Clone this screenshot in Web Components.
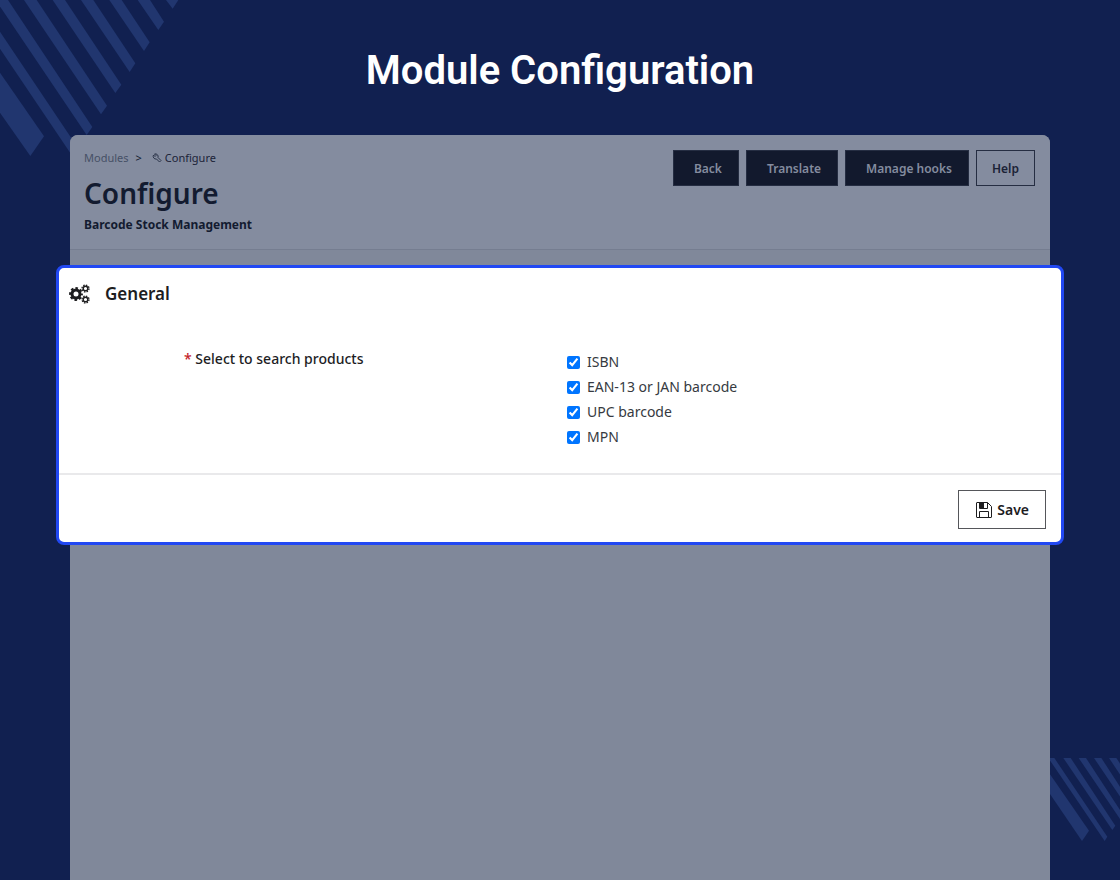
<!DOCTYPE html>
<html lang="en">
<head>
<meta charset="utf-8">
<meta name="viewport" content="width=device-width, initial-scale=1">
<title>Module Configuration</title>
<style>
    body{
        margin: 0;
        background: #112050;
        font-family: "Noto Sans", sans-serif;
        font-size: 14px;
        color: #1d1d1f;
    }
</style>
</head>
<body>
<module-page heading="Module Configuration">
    <page-header slot="header" heading="Configure" subtitle="Barcode Stock Management">
        <bread-crumbs slot="crumbs"></bread-crumbs>
        <tool-button primary>Back</tool-button>
        <tool-button primary>Translate</tool-button>
        <tool-button primary>Manage hooks</tool-button>
        <tool-button>Help</tool-button>
    </page-header>
    <settings-card heading="General" label="Select to search products">
        <check-option name="isbn">ISBN</check-option>
        <check-option name="ean13">EAN-13 or JAN barcode</check-option>
        <check-option name="upc">UPC barcode</check-option>
        <check-option name="mpn">MPN</check-option>
        <save-button slot="footer">Save</save-button>
    </settings-card>
</module-page>

<script>
'use strict'

const makeTemplate = (html) => {
    const template = document.createElement('template')
    template.innerHTML = html
    return template
}

class BaseElement extends HTMLElement {
    constructor () {
        super()
        this.attachShadow({mode:'open'})
        this.shadowRoot.appendChild(this.constructor.template.content.cloneNode(true))
    }
    fill(selector, name){
        this.shadowRoot.querySelector(selector).textContent = this.getAttribute(name)
    }
}

class ModulePage extends BaseElement {
    static template = makeTemplate(`
        <style>
            :host{
                position: relative;
                display: flex;
                flex-direction: column;
                box-sizing: border-box;
                min-height: 100vh;
                overflow: hidden;
            }
            .stripes{
                position: absolute;
                fill: #21366f;
            }
            .stripes-top{
                top: 0;
                left: 0;
            }
            .stripes-bottom{
                right: 0;
                bottom: 39px;
            }
            h1{
                position: relative;
                margin: 0;
                padding: 47px 16px 40px;
                font: 600 40px/48px Roboto, sans-serif;
                text-align: center;
                color: #ffffff;
            }
            main{
                position: relative;
                flex: 1;
                margin: 0 70px;
                background: #80889a;
                border-radius: 8px 8px 0 0;
            }
        </style>
        <svg class="stripes stripes-top" width="180" height="157" viewBox="0 0 540 471" aria-hidden="true">
            <path d="M0 218L132 409L91 468L0 338z"/>
            <path d="M0 95L234 444L217 468L0 146z"/>
            <path d="M-13 0H24L277 381L260 405z"/>
            <path d="M72 0H110L321 317L303 343z"/>
            <path d="M158 0H195L364 254L346 279z"/>
            <path d="M243 0H280L406 190L389 216z"/>
            <path d="M328 0H365L449 127L432 153z"/>
            <path d="M413 0H450L492 65L475 90z"/>
            <path d="M498 0H535L518 26z"/>
        </svg>
        <svg class="stripes stripes-bottom" width="70" height="83" viewBox="60 54 210 249" aria-hidden="true">
            <path d="M60 103L177 272L156 303L60 162z"/>
            <path d="M55 54H73L232 290L224 303z"/>
            <path d="M100 54H122L256 257L247 270z"/>
            <path d="M146 54H168L279 224L270 237z"/>
            <path d="M192 54H214L300 186V214z"/>
            <path d="M237 54H259L300 116V148z"/>
        </svg>
        <h1></h1>
        <main>
            <slot name="header"></slot>
            <slot></slot>
        </main>
    `)
    connectedCallback(){
        this.fill('h1', 'heading')
    }
}
window.customElements.define('module-page', ModulePage)

class PageHeader extends BaseElement {
    static template = makeTemplate(`
        <style>
            :host{
                display: flex;
                justify-content: space-between;
                align-items: flex-start;
                gap: 16px;
                padding: 15px 15px 16px 14px;
                background: #848c9f;
                border-bottom: 1px solid #757d90;
                border-radius: 8px 8px 0 0;
                color: #131b30;
            }
            h2{
                margin: 7px 0 4px;
                font-size: 28px;
                line-height: 40px;
                font-weight: 600;
            }
            p{
                margin: 0;
                font-size: 12px;
                line-height: 16px;
                font-weight: 700;
            }
            .tools{
                display: flex;
                flex-wrap: wrap;
                gap: 7px;
            }
        </style>
        <div>
            <slot name="crumbs"></slot>
            <h2></h2>
            <p></p>
        </div>
        <div class="tools"><slot></slot></div>
    `)
    connectedCallback(){
        this.fill('h2', 'heading')
        this.fill('p', 'subtitle')
    }
}
window.customElements.define('page-header', PageHeader)

class BreadCrumbs extends BaseElement {
    static template = makeTemplate(`
        <style>
            :host{
                display: block;
                font-size: 11px;
                line-height: 16px;
            }
            nav{
                display: flex;
                align-items: center;
            }
            a{
                display: flex;
                align-items: center;
                gap: 3px;
                color: #1b2338;
                text-decoration: none;
            }
            .parent{
                color: #465066;
            }
            .sep{
                margin: 0 10px 0 7px;
            }
            svg{
                display: block;
            }
        </style>
        <nav aria-label="Breadcrumb">
            <a class="parent" href="#modules">Modules</a>
            <span class="sep">&gt;</span>
            <a href="#configure">
                <svg width="10" height="10" viewBox="0 0 20 20" fill="none" stroke="#2b3449" stroke-width="2" stroke-linejoin="round" aria-hidden="true">
                    <path d="M3 4L6 7L8 5L5 2A5.500 5.500 0 0 1 12 9L18 15L15 18L9 12A5.500 5.500 0 0 1 3 4z"/>
                </svg>
                Configure
            </a>
        </nav>
    `)
}
window.customElements.define('bread-crumbs', BreadCrumbs)

class ToolButton extends BaseElement {
    static template = makeTemplate(`
        <style>
            :host{
                display: block;
            }
            button{
                height: 36px;
                padding: 0 15px;
                border: 1px solid #252d42;
                background: transparent;
                font: inherit;
                font-size: 12px;
                font-weight: 600;
                color: #1b2236;
                cursor: pointer;
            }
            :host([primary]) button{
                padding: 0 16px 0 20px;
                background: #12192d;
                color: #848c9f;
            }
        </style>
        <button type="button"><slot></slot></button>
    `)
}
window.customElements.define('tool-button', ToolButton)

class SettingsCard extends BaseElement {
    static template = makeTemplate(`
        <style>
            :host{
                display: block;
                margin: 15px -14px 0;
                border: 3px solid #2148f3;
                border-radius: 8px;
                background: #ffffff;
            }
            header{
                display: flex;
                align-items: center;
                gap: 15px;
                padding: 14px 10px;
            }
            h3{
                margin: 0;
                font-size: 17px;
                line-height: 24px;
                font-weight: 600;
            }
            svg{
                display: block;
            }
            fieldset{
                display: grid;
                grid-template-columns: 1fr 1fr;
                gap: 12px;
                margin: 0;
                padding: 29px 0 26px;
                border: 0;
            }
            .label{
                padding-left: 125px;
                line-height: 20px;
                font-weight: 500;
            }
            .star{
                color: #c4242b;
            }
            .options{
                display: grid;
                gap: 5px;
                padding: 3px 0 0 1px;
            }
            footer{
                display: flex;
                justify-content: flex-end;
                padding: 15px 15px 13px;
                border-top: 2px solid #e9e9eb;
            }
        </style>
        <form>
            <header>
                <svg width="21" height="20" viewBox="0 0 21 20" fill="none" stroke="#1d1d1f" aria-hidden="true">
                    <circle cx="7" cy="10" r="4" stroke-width="3"/>
                    <circle cx="7" cy="10" r="5.900" stroke-width="2" stroke-dasharray="2.600 2.034" stroke-dashoffset="1.300"/>
                    <circle cx="16.500" cy="4.500" r="2.300" stroke-width="1.400"/>
                    <circle cx="16.500" cy="4.500" r="3.500" stroke-width="1.300" stroke-dasharray="1.500 1.249"/>
                    <circle cx="16.500" cy="15.500" r="2.300" stroke-width="1.400"/>
                    <circle cx="16.500" cy="15.500" r="3.500" stroke-width="1.300" stroke-dasharray="1.500 1.249"/>
                </svg>
                <h3></h3>
            </header>
            <fieldset aria-labelledby="label">
                <div class="label"><span class="star">*</span> <span id="label"></span></div>
                <div class="options"><slot></slot></div>
            </fieldset>
            <footer><slot name="footer"></slot></footer>
        </form>
    `)
    connectedCallback(){
        this.fill('h3', 'heading')
        this.fill('#label', 'label')
    }
}
window.customElements.define('settings-card', SettingsCard)

class CheckOption extends BaseElement {
    static template = makeTemplate(`
        <style>
            :host{
                display: flex;
            }
            label{
                display: flex;
                align-items: center;
                gap: 7px;
                line-height: 20px;
                color: #363a41;
            }
            input{
                width: 13px;
                height: 13px;
                margin: 0;
                accent-color: #0075ff;
            }
        </style>
        <label><input type="checkbox" checked><span><slot></slot></span></label>
    `)
    connectedCallback(){
        this.shadowRoot.querySelector('input').name = this.getAttribute('name')
    }
}
window.customElements.define('check-option', CheckOption)

class SaveButton extends BaseElement {
    static template = makeTemplate(`
        <style>
            :host{
                display: block;
            }
            button{
                display: flex;
                align-items: center;
                gap: 5px;
                height: 39px;
                padding: 0 16px 0 17px;
                border: 1px solid #55565a;
                background: #ffffff;
                font: inherit;
                font-weight: 600;
                color: #1d1d1f;
                cursor: pointer;
            }
            svg{
                display: block;
            }
        </style>
        <button type="button">
            <svg width="16" height="16" viewBox="0 0 16 16" fill="none" stroke="#1d1d1f" aria-hidden="true">
                <path d="M1 .5H11.500L15.500 4.500V15Q15.500 15.500 15 15.500H1Q.5 15.500 .5 15V1Q.5 .5 1 .5z"/>
                <path d="M3.500 .5V6.500H11.500V.5"/>
                <path d="M4 1H8V6H4z" fill="#1d1d1f" stroke="none"/>
                <path d="M3.500 15V9.500H12.500V15"/>
            </svg>
            <slot></slot>
        </button>
    `)
}
window.customElements.define('save-button', SaveButton)
</script>
</body>
</html>
